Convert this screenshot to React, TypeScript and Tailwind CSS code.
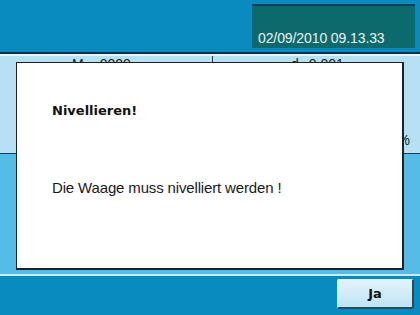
export default function App() {
  return (
    <div className="flex h-[315px] w-[420px] flex-col overflow-hidden bg-[#0a8bbf] font-['Liberation_Sans',Arial,sans-serif]">
      {/* header with clock */}
      <div className="flex h-[52px] shrink-0 justify-end bg-[#0a8bbf] pr-[5px] pt-[4px]">
        <div className="flex h-[44px] w-[163px] items-end border-t-2 border-[#0b3f5a] bg-[#0c6a6c] pb-[3px] pl-[6px]">
          <span className="text-[14px] leading-none tracking-[-0.1px] text-[#e8f4f4]">02/09/2010 09.13.33</span>
        </div>
      </div>
      <div className="h-[2px] shrink-0 bg-[#0b2f4a]" />

      {/* display area behind the dialog */}
      <div className="relative flex flex-1 flex-col">
        <div className="h-[2px] bg-[#e6f5fb]" />
        <div className="relative grid h-[97px] grid-cols-[212px_1fr] bg-[#b6e1f4] text-[14px] text-[#1a1a1a]">
          <div className="flex gap-[16px] pl-[72px] pt-[1px] leading-none">
            <span>M</span>
            <span>0000</span>
          </div>
          <div className="flex border-l border-[#2a3a44]">
            <div className="flex gap-[10px] pl-[78px] pt-[1px] leading-none">
              <span>d</span>
              <span>0.001</span>
            </div>
          </div>
          <span className="absolute bottom-[6px] right-[10px] text-[14px] leading-none">%</span>
        </div>
        <div className="h-[1px] bg-[#1d3f55]" />
        <div className="flex-1 bg-[#55bce8]" />
        <div className="h-[2px] bg-[#c9ecf8]" />

        {/* dialog */}
        <div className="absolute left-[16px] top-[8px] flex h-[208px] w-[388px] flex-col border border-r-2 border-b-2 border-[#1c2328] bg-white pl-[35px]">
          <div className="pt-[41px] font-['DejaVu_Sans',sans-serif] text-[13px] font-bold leading-none text-[#111]">
            Nivellieren!
          </div>
          <div className="pt-[63px] text-[15px] leading-none tracking-[-0.15px] text-[#1a1a1a]">
            Die Waage muss nivelliert werden !
          </div>
        </div>
      </div>

      {/* bottom bar */}
      <div className="flex h-[39px] shrink-0 items-start justify-end bg-[#0a8bbf] pr-[6px] pt-[3px]">
        <button className="flex h-[30px] w-[77px] items-center justify-center rounded-[2px] border border-r-2 border-b-2 border-[#d9f0fa] border-r-[#2a4a5a] border-b-[#2a4a5a] bg-gradient-to-b from-[#e2f3fb] to-[#bfe3f3] font-['DejaVu_Sans',sans-serif] text-[13px] font-bold text-[#111]">
          Ja
        </button>
      </div>
    </div>
  )
}
